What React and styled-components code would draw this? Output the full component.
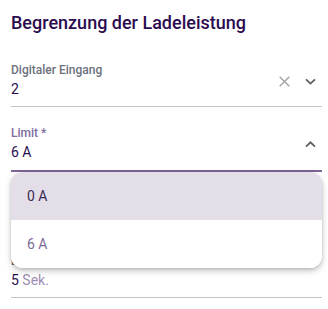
import styled, { createGlobalStyle } from "styled-components";

const GlobalStyle = createGlobalStyle`
  body {
    margin: 0;
    background: #ffffff;
    font-family: Roboto, "Liberation Sans", Arial, sans-serif;
  }
`;

const Page = styled.div`
  width: 311px;
  padding: 11px 6px 0 11px;
`;

const Title = styled.h2`
  margin: 0 0 27px;
  font-size: 18px;
  line-height: 24px;
  font-weight: 500;
  color: #2b0c4e;
`;

const FieldWrap = styled.div`
  position: relative;
  margin-bottom: ${(p) => p.$gap || 18}px;
`;

const Field = styled.div`
  display: flex;
  align-items: center;
  padding-bottom: ${(p) => (p.$active ? "7px" : "6px")};
  border-bottom: ${(p) => (p.$active ? "2px solid #7d6598" : "1px solid #c4c4c4")};
`;

const Texts = styled.div`
  flex: 1;
  min-width: 0;
`;

const Label = styled.div`
  font-size: 12px;
  line-height: 16px;
  font-weight: 500;
  color: ${(p) => (p.$active ? "#7f6b9d" : "#6c717d")};
`;

const Value = styled.div`
  font-size: 14px;
  line-height: 22px;
  color: #2a1050;
`;

const Unit = styled.span`
  color: #9d8fb3;
`;

const Icons = styled.div`
  display: flex;
  align-items: center;
  gap: 15px;
  margin-right: 6px;
`;

const IconBtn = styled.span`
  display: flex;
  align-items: center;
  justify-content: center;
  width: 11px;
  height: 11px;
  color: ${(p) => (p.$muted ? "#a3a3a3" : "#5f5f5f")};
`;

const Menu = styled.ul`
  position: absolute;
  left: 0;
  right: 0;
  top: 100%;
  margin: 0;
  padding: 0;
  list-style: none;
  background: #ffffff;
  border-radius: 12px;
  overflow: hidden;
  box-shadow: 0 3px 6px rgba(0, 0, 0, 0.22), 0 1px 3px rgba(0, 0, 0, 0.12);
  z-index: 10;
`;

const Option = styled.li`
  height: 48px;
  display: flex;
  align-items: center;
  padding-left: 16px;
  font-size: 14px;
  background: ${(p) => (p.$selected ? "#e3dee8" : "#ffffff")};
  color: ${(p) => (p.$selected ? "#3b2b55" : "#7d6b99")};
`;

const CloseIcon = () => (
  <svg width="11" height="11" viewBox="0 0 11 11">
    <path d="M0.7 0.7 L10.3 10.3 M10.3 0.7 L0.7 10.3" stroke="currentColor" strokeWidth="1.4" fill="none" />
  </svg>
);

const Chevron = ({ up }) => (
  <svg width="11" height="7" viewBox="0 0 11 7">
    <path
      d={up ? "M1 5.6 L5.5 1.3 L10 5.6" : "M1 1.3 L5.5 5.6 L10 1.3"}
      stroke="currentColor"
      strokeWidth="1.8"
      fill="none"
    />
  </svg>
);

export default function App() {
  return (
    <Page>
      <GlobalStyle />
      <Title>Begrenzung der Ladeleistung</Title>

      <FieldWrap>
        <Field>
          <Texts>
            <Label>Digitaler Eingang</Label>
            <Value>2</Value>
          </Texts>
          <Icons>
            <IconBtn $muted>
              <CloseIcon />
            </IconBtn>
            <IconBtn>
              <Chevron />
            </IconBtn>
          </Icons>
        </Field>
      </FieldWrap>

      <FieldWrap $gap={81}>
        <Field $active>
          <Texts>
            <Label $active>Limit *</Label>
            <Value>6 A</Value>
          </Texts>
          <Icons>
            <IconBtn>
              <Chevron up />
            </IconBtn>
          </Icons>
        </Field>
        <Menu>
          <Option $selected>0 A</Option>
          <Option>6 A</Option>
        </Menu>
      </FieldWrap>

      <FieldWrap>
        <Field>
          <Texts>
            <Label>Ladeverzögerung</Label>
            <Value>
              5 <Unit>Sek.</Unit>
            </Value>
          </Texts>
        </Field>
      </FieldWrap>
    </Page>
  );
}
